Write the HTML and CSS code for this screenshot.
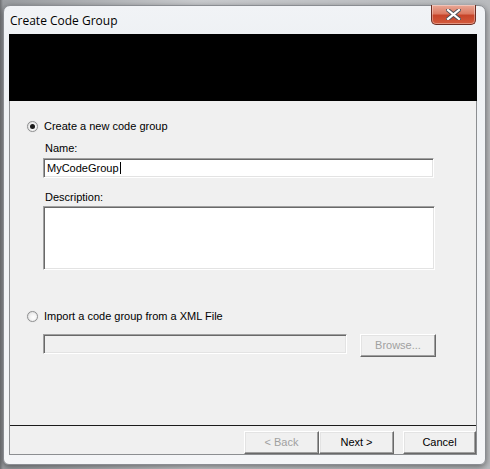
FILE: index.html
```html
<!DOCTYPE html>
<html>
<head>
<meta charset="utf-8">
<title>Create Code Group</title>
<link rel="stylesheet" href="styles.css">
</head>
<body>
<div class="window">
  <div class="titlebar">
    <span class="title">Create Code Group</span>
    <div class="close">
      <svg width="15" height="11" viewBox="0 0 15 11"><path d="M2 1 L13 10 M13 1 L2 10" stroke="#4a4f57" stroke-width="4" stroke-linecap="square"/><path d="M2 1 L13 10 M13 1 L2 10" stroke="#ffffff" stroke-width="2.2" stroke-linecap="square"/></svg>
    </div>
  </div>
  <div class="client">
    <div class="banner"></div>
    <div class="content">
      <div class="radio-row first">
        <span class="radio checked"></span>
        <span class="radio-label">Create a new code group</span>
      </div>
      <div class="field-label name-label">Name:</div>
      <div class="textbox name-box"><span class="caret">MyCodeGroup</span></div>
      <div class="field-label desc-label">Description:</div>
      <div class="textbox desc-box"></div>
      <div class="radio-row second">
        <span class="radio"></span>
        <span class="radio-label">Import a code group from a XML File</span>
      </div>
      <div class="file-row">
        <div class="textbox file-box disabled"></div>
        <div class="button browse disabled-text">Browse...</div>
      </div>
    </div>
    <div class="footer">
      <div class="separator"></div>
      <div class="buttons">
        <div class="button wide disabled-text">&lt; Back</div>
        <div class="button wide">Next &gt;</div>
        <div class="button cancel">Cancel</div>
      </div>
    </div>
  </div>
</div>
</body>
</html>
```

FILE: styles.css
```css
html, body {
  margin: 0;
  padding: 0;
}
body {
  width: 490px;
  height: 469px;
  overflow: hidden;
  background: linear-gradient(to right, #6d6f72 0, #9a9da1 3px, #c9cbce 40%, #b9bbbe 100%);
  font-family: "Liberation Sans", Arial, sans-serif;
  font-size: 11px;
  color: #000;
}
.window {
  margin: 5px 0 0 3px;
  width: 483px;
  height: 460px;
  box-sizing: border-box;
  padding: 0 8px 9px 5px;
  background: linear-gradient(to bottom, #f1f3f6 0, #eef1f4 30px, #f4f5f7 100%);
  border-radius: 7px 7px 6px 6px;
  border: 1px solid #8a8d92;
  box-shadow: 0 2px 6px rgba(0,0,0,0.45);
  display: flex;
  flex-direction: column;
  position: relative;
}
.titlebar {
  height: 28px;
  display: flex;
  align-items: center;
  flex-shrink: 0;
}
.title {
  font-family: "Open Sans", "Noto Sans", sans-serif;
  font-size: 12px;
  padding-left: 1px;
  color: #000;
  text-shadow: 0 0 6px #fff;
}
.close {
  position: absolute;
  top: -1px;
  right: 9px;
  width: 43px;
  height: 19px;
  border: 1px solid #6b2c22;
  border-top: none;
  border-radius: 0 0 5px 5px;
  background: linear-gradient(to bottom, #e9a897 0, #dc7b63 45%, #c7452a 55%, #d45a3c 100%);
  box-shadow: inset 0 0 0 1px rgba(255,255,255,0.35);
  display: flex;
  align-items: center;
  justify-content: center;
}
.client {
  flex: 1;
  display: flex;
  flex-direction: column;
  background: #f0f0f0;
  border: 1px solid #8c8e91;
  border-top: none;
}
.banner {
  height: 67px;
  background: #000;
  flex-shrink: 0;
  margin: 0 -1px;
}
.content {
  flex: 1;
  display: flex;
  flex-direction: column;
  align-items: flex-start;
}
.radio-row {
  display: flex;
  align-items: center;
  height: 13px;
  padding-left: 17px;
}
.radio-row.first { margin-top: 19px; }
.radio-row.second { margin-top: 40px; }
.radio {
  width: 11px;
  height: 11px;
  box-sizing: border-box;
  border-radius: 50%;
  border: 1px solid #8f9091;
  background: radial-gradient(circle at 60% 60%, #ffffff 0, #f2f2f2 45%, #d6d6d6 100%);
  box-shadow: 0 0 1px #c0c0c0;
  display: flex;
  align-items: center;
  justify-content: center;
  margin-right: 6px;
}
.radio.checked::after {
  content: "";
  width: 5px;
  height: 5px;
  border-radius: 50%;
  background: #1a1a1a;
}
.radio-label {
  line-height: 13px;
}
.field-label {
  padding-left: 35px;
  line-height: 13px;
}
.name-label { margin-top: 9px; }
.desc-label { margin-top: 13px; }
.textbox {
  margin-left: 33px;
  box-sizing: border-box;
  background: #fff;
  border: 1px solid;
  border-color: #a0a0a0 #ffffff #ffffff #a0a0a0;
  box-shadow: inset 1px 1px 0 #696969, inset -1px -1px 0 #e3e3e3;
}
.name-box {
  margin-top: 3px;
  width: 391px;
  height: 20px;
  padding: 2px 0 0 3px;
  line-height: 14px;
}
.caret {
  border-right: 1px solid #000;
  padding-right: 1px;
}
.desc-box {
  margin-top: 2px;
  width: 392px;
  height: 64px;
}
.file-row {
  display: flex;
  align-items: flex-start;
  margin-top: 11px;
}
.file-box {
  width: 304px;
  height: 20px;
}
.textbox.disabled {
  background: #f0f0f0;
}
.button {
  box-sizing: border-box;
  display: flex;
  align-items: center;
  justify-content: center;
  background: #f0f0f0;
  border: 1px solid;
  border-color: #ffffff #696969 #696969 #ffffff;
  box-shadow: inset -1px -1px 0 #a0a0a0, inset 1px 1px 0 #e3e3e3;
  line-height: 13px;
}
.browse {
  margin-left: 13px;
  width: 76px;
  height: 23px;
}
.disabled-text {
  color: #a0a0a0;
}
.footer {
  flex-shrink: 0;
  display: flex;
  flex-direction: column;
}
.separator {
  height: 1px;
  background: #1b1b1b;
  margin-bottom: 5px;
}
.buttons {
  display: flex;
  justify-content: flex-end;
  height: 23px;
}
.button.wide {
  width: 75px;
}
.button.cancel {
  width: 73px;
  margin-left: 9px;
}
```
